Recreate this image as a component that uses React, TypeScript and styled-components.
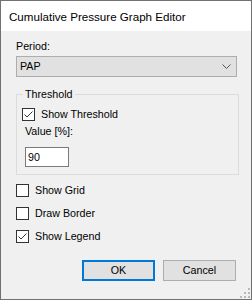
import { createGlobalStyle, styled } from "styled-components";

const GlobalStyle = createGlobalStyle`
  body {
    margin: 0;
    background: #ffffff;
    font-family: "Liberation Sans", Arial, sans-serif;
  }
`;

const Window = styled.div`
  position: relative;
  width: 252px;
  height: 300px;
  box-sizing: border-box;
  border: 1px solid #717171;
  background: #f0f0f0;
  display: flex;
  flex-direction: column;
  color: #000000;
`;

const TitleBar = styled.div`
  height: 30px;
  background: #ffffff;
  display: flex;
  align-items: center;
  padding-left: 8px;
  font-size: 11.6px;
`;

const Client = styled.div`
  display: flex;
  flex-direction: column;
  padding: 9px 14px 0 15px;
  font-size: 10.7px;
  line-height: 13px;
`;

const Label = styled.div<{ $indent?: number; $top?: number }>`
  margin-left: ${(p) => p.$indent ?? 0}px;
  margin-top: ${(p) => p.$top ?? 0}px;
  height: 13px;
`;

const Combo = styled.div`
  margin-top: 3px;
  height: 21px;
  box-sizing: border-box;
  border: 1px solid #adadad;
  background: #e1e1e1;
  display: flex;
  align-items: center;
  justify-content: space-between;
  padding: 0 5px 0 3px;
`;

const GroupBox = styled.fieldset`
  margin: 11px -2px 0 0;
  padding: 7px 0 7px 5px;
  border: 1px solid #dcdcdc;
  min-width: 0;
  display: flex;
  flex-direction: column;
  align-items: flex-start;
`;

const GroupTitle = styled.legend`
  margin-left: 1px;
  padding: 0 2px;
  line-height: 13px;
`;

const CheckRow = styled.div<{ $top?: number }>`
  display: flex;
  align-items: flex-start;
  gap: 6px;
  margin-top: ${(p) => p.$top ?? 0}px;
  height: 13px;
`;

const Box = styled.div`
  width: 13px;
  height: 13px;
  box-sizing: border-box;
  border: 1px solid #333333;
  background: #ffffff;
  display: flex;
  align-items: center;
  justify-content: center;
`;

const TextBox = styled.div`
  margin: 9px 0 0 3px;
  width: 44px;
  height: 20px;
  box-sizing: border-box;
  border: 1px solid #7a7a7a;
  background: #ffffff;
  padding-left: 2px;
  display: flex;
  align-items: center;
`;

const ButtonRow = styled.div`
  display: flex;
  justify-content: flex-end;
  gap: 8px;
  margin: 17px 1px 0 0;
`;

const Button = styled.div<{ $default?: boolean }>`
  width: 73px;
  height: 21px;
  box-sizing: border-box;
  border: ${(p) => (p.$default ? "2px solid #0078d7" : "1px solid #adadad")};
  background: #e1e1e1;
  display: flex;
  align-items: center;
  justify-content: center;
`;

const Grip = styled.svg`
  position: absolute;
  right: 1px;
  bottom: 1px;
`;

function Check({ checked, label, top }: { checked?: boolean; label: string; top?: number }) {
  return (
    <CheckRow $top={top}>
      <Box>
        {checked && (
          <svg width="11" height="11" viewBox="0 0 11 11">
            <polyline points="1.5,5.5 4,8 9.5,2.5" fill="none" stroke="#333" strokeWidth="1" />
          </svg>
        )}
      </Box>
      <span>{label}</span>
    </CheckRow>
  );
}

export default function App() {
  return (
    <>
      <GlobalStyle />
      <Window>
        <TitleBar>Cumulative Pressure Graph Editor</TitleBar>
        <Client>
          <Label>Period:</Label>
          <Combo>
            <span>PAP</span>
            <svg width="9" height="5" viewBox="0 0 9 5">
              <polyline points="0.5,0.5 4.5,4.5 8.5,0.5" fill="none" stroke="#555" strokeWidth="1" />
            </svg>
          </Combo>
          <GroupBox>
            <GroupTitle>Threshold</GroupTitle>
            <Check checked label="Show Threshold" />
            <Label $indent={3} $top={4}>Value [%]:</Label>
            <TextBox>90</TextBox>
          </GroupBox>
          <Check label="Show Grid" top={9} />
          <Check label="Draw Border" top={10} />
          <Check checked label="Show Legend" top={10} />
          <ButtonRow>
            <Button $default>OK</Button>
            <Button>Cancel</Button>
          </ButtonRow>
        </Client>
        <Grip width="10" height="10" viewBox="0 0 10 10">
          <rect x="8" y="0" width="2" height="2" fill="#b8b8b8" />
          <rect x="4" y="4" width="2" height="2" fill="#b8b8b8" />
          <rect x="8" y="4" width="2" height="2" fill="#b8b8b8" />
          <rect x="0" y="8" width="2" height="2" fill="#b8b8b8" />
          <rect x="4" y="8" width="2" height="2" fill="#b8b8b8" />
          <rect x="8" y="8" width="2" height="2" fill="#b8b8b8" />
        </Grip>
      </Window>
    </>
  );
}
